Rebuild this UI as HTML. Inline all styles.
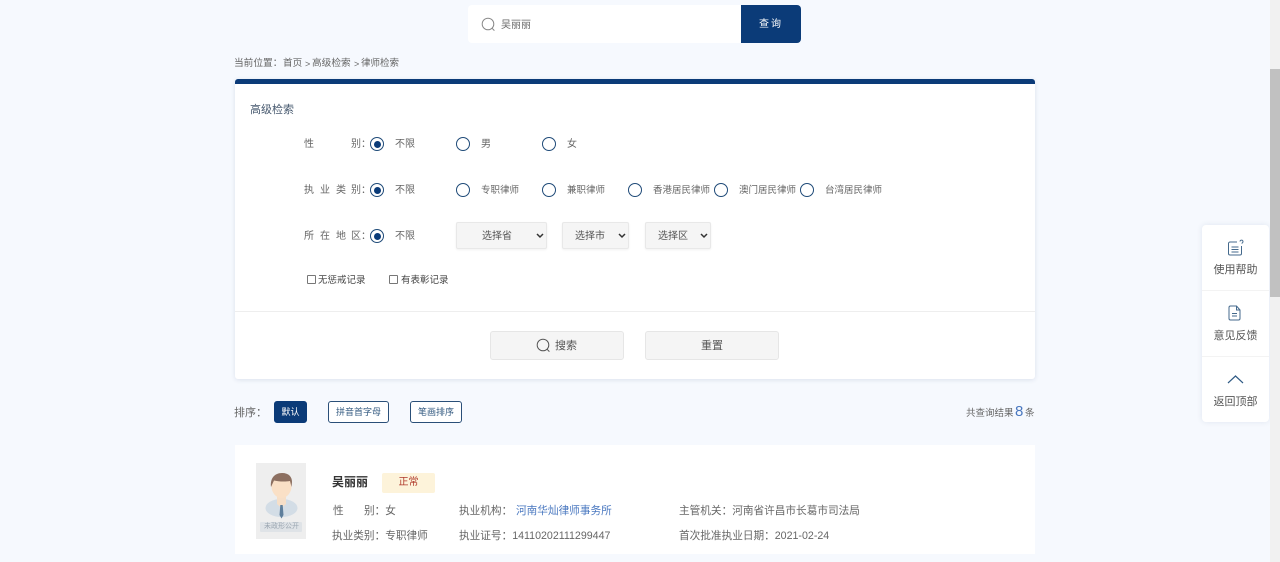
<!DOCTYPE html>
<html lang="zh-CN">
<head>
<meta charset="utf-8">
<title>律师检索</title>
<style>
html,body{margin:0;padding:0;width:1280px;height:562px;overflow:hidden;background:#f6f9fe}
body{position:relative;font-family:"Liberation Sans","Noto Sans CJK SC",sans-serif;color:#666}
.a{position:absolute;white-space:nowrap}
.t10{font-size:10px;line-height:14px;color:#666}
.t11{font-size:10.65px;line-height:14px;color:#666}
.r{position:absolute;width:12px;height:12px;border:1px solid #1f4a78;border-radius:50%;background:#fff;box-sizing:content-box}
.r.on:after{content:"";position:absolute;left:2.5px;top:2.5px;width:7px;height:7px;border-radius:50%;background:#0b3b78}
.sel{position:absolute;top:222px;height:27px;background:#f5f5f5;border:1px solid #e8e8e8;box-sizing:border-box;border-radius:2px;font-size:10px;line-height:27px;color:#555;box-shadow:0 1px 2px rgba(0,0,0,.06)}
.sel svg{position:absolute;top:10px}
.sel span{position:absolute;top:0}
.btn{position:absolute;top:331px;width:134px;height:29px;background:#f5f5f5;border:1px solid #e6e6e6;box-sizing:border-box;border-radius:3px;font-size:11px;line-height:28px;color:#555;text-align:center}
.cb{position:absolute;top:275px;width:7px;height:7px;border:1px solid #777;border-radius:1px;background:#fff}
.sort{position:absolute;top:401px;height:22px;box-sizing:border-box;border:1px solid #2a4f78;border-radius:3px;font-size:9px;line-height:20px;text-align:center;color:#335a80;background:#fff}
.side{position:absolute;left:1202px;top:225px;width:67px;height:197px;background:#fff;border-radius:4px;box-shadow:0 0 6px rgba(30,60,110,.1)}
.side .l{position:absolute;left:0;width:67px;text-align:center;font-size:11px;line-height:14px;color:#555}
.side .d{position:absolute;left:0;width:67px;height:1px;background:#f3f3f3}
</style>
</head>
<body>

<!-- top search -->
<div class="a" style="left:468px;top:5px;width:274px;height:38px;background:#fff;border-radius:4px 0 0 4px"></div>
<svg class="a" style="left:481px;top:17px" width="15" height="15" viewBox="0 0 15 15" fill="none" stroke="#888" stroke-width="1"><circle cx="7" cy="7" r="5.8"/><path d="M11 11.2l2.4 2.4"/></svg>
<div class="a" style="left:501px;top:18px;font-size:10px;line-height:15px;color:#666">吴丽丽</div>
<div class="a" style="left:741px;top:5px;width:60px;height:38px;background:#0b3b78;border-radius:0 4px 4px 0;color:#fff;font-size:10px;line-height:40px;text-align:center;letter-spacing:2px">查询</div>

<!-- breadcrumb -->
<div class="a" style="left:234px;top:57px;font-size:9.7px;line-height:14px">当前位置：</div>
<div class="a" style="left:283px;top:57px;font-size:9.6px;line-height:14px">首页</div>
<div class="a" style="left:305px;top:57px;font-size:9px;line-height:14px">&gt;</div>
<div class="a" style="left:312px;top:57px;font-size:9.7px;line-height:14px">高级检索</div>
<div class="a" style="left:354px;top:57px;font-size:9px;line-height:14px">&gt;</div>
<div class="a" style="left:361px;top:57px;font-size:9.5px;line-height:14px">律师检索</div>

<!-- panel -->
<div class="a" style="left:235px;top:79px;width:800px;height:300px;background:#fff;border-top:5px solid #0b3b78;box-sizing:border-box;border-radius:3px;box-shadow:0 1px 5px rgba(30,60,110,.12)"></div>
<div class="a" style="left:250px;top:102px;font-size:11px;line-height:16px;color:#46586e">高级检索</div>

<div class="a t10" style="left:304px;top:138px">性</div>
<div class="a t10" style="left:351px;top:138px">别：</div>
<div class="r on" style="left:370px;top:137px"></div>
<div class="a t10" style="left:395px;top:138px">不限</div>
<div class="r" style="left:456px;top:137px"></div>
<div class="a t10" style="left:481px;top:138px">男</div>
<div class="r" style="left:542px;top:137px"></div>
<div class="a t10" style="left:567px;top:138px">女</div>

<div class="a t10" style="left:304px;top:184px;letter-spacing:6px">执业类</div>
<div class="a t10" style="left:351px;top:184px">别：</div>
<div class="r on" style="left:370px;top:183px"></div>
<div class="a t10" style="left:395px;top:184px">不限</div>
<div class="r" style="left:456px;top:183px"></div>
<div class="a" style="left:481px;top:184px;font-size:9.5px;line-height:14px">专职律师</div>
<div class="r" style="left:542px;top:183px"></div>
<div class="a" style="left:567px;top:184px;font-size:9.5px;line-height:14px">兼职律师</div>
<div class="r" style="left:628px;top:183px"></div>
<div class="a" style="left:653px;top:184px;font-size:9.5px;line-height:14px">香港居民律师</div>
<div class="r" style="left:714px;top:183px"></div>
<div class="a" style="left:739px;top:184px;font-size:9.5px;line-height:14px">澳门居民律师</div>
<div class="r" style="left:800px;top:183px"></div>
<div class="a" style="left:825px;top:184px;font-size:9.5px;line-height:14px">台湾居民律师</div>

<div class="a t10" style="left:304px;top:230px;letter-spacing:6px">所在地</div>
<div class="a t10" style="left:351px;top:230px">区：</div>
<div class="r on" style="left:370px;top:229px"></div>
<div class="a t10" style="left:395px;top:230px">不限</div>

<div class="sel" style="left:456px;width:91px"><span style="left:25px">选择省</span><svg style="left:79px" width="8" height="6" viewBox="0 0 8 6" fill="none" stroke="#333" stroke-width="1.5"><path d="M1 1l3 3 3-3"/></svg></div>
<div class="sel" style="left:562px;width:67px"><span style="left:12px">选择市</span><svg style="left:55px" width="8" height="6" viewBox="0 0 8 6" fill="none" stroke="#333" stroke-width="1.5"><path d="M1 1l3 3 3-3"/></svg></div>
<div class="sel" style="left:645px;width:66px"><span style="left:12px">选择区</span><svg style="left:54px" width="8" height="6" viewBox="0 0 8 6" fill="none" stroke="#333" stroke-width="1.5"><path d="M1 1l3 3 3-3"/></svg></div>

<div class="cb" style="left:307px"></div>
<div class="a" style="left:318px;top:274px;font-size:9.5px;line-height:14px;color:#444">无惩戒记录</div>
<div class="cb" style="left:389px"></div>
<div class="a" style="left:401px;top:274px;font-size:9.5px;line-height:14px;color:#444">有表彰记录</div>

<div class="a" style="left:235px;top:311px;width:800px;height:1px;background:#eee"></div>

<div class="btn" style="left:490px"></div>
<svg class="a" style="left:536px;top:338px" width="15" height="15" viewBox="0 0 15 15" fill="none" stroke="#555" stroke-width="1"><circle cx="7" cy="7" r="5.8"/><path d="M11 11.2l2.4 2.4"/></svg>
<div class="a" style="left:555px;top:339px;font-size:11px;line-height:15px;color:#555">搜索</div>
<div class="btn" style="left:645px;line-height:29px">重置</div>

<!-- sort -->
<div class="a" style="left:234px;top:405px;font-size:11px;line-height:16px;color:#666">排序：</div>
<div class="sort" style="left:274px;width:33px;background:#0b3b78;color:#fff;border-color:#0b3b78">默认</div>
<div class="sort" style="left:328px;width:61px">拼音首字母</div>
<div class="sort" style="left:410px;width:52px">笔画排序</div>
<div class="a" style="left:966px;top:407px;font-size:9.5px;line-height:14px;color:#666">共查询结果</div>
<div class="a" style="left:1015px;top:403px;font-size:15px;line-height:18px;color:#4a78c0">8</div>
<div class="a" style="left:1025px;top:407px;font-size:9.5px;line-height:14px;color:#666">条</div>

<!-- result card -->
<div class="a" style="left:235px;top:445px;width:800px;height:109px;background:#fff"></div>
<div class="a" style="left:256px;top:463px;width:50px;height:76px;background:#eeeeee"></div>
<svg class="a" style="left:256px;top:463px" width="50" height="76" viewBox="0 0 50 76">
<ellipse cx="25.500" cy="45" rx="16" ry="9" fill="#d3dde6"/>
<path d="M21 33h9v8l-4.500 4-4.500-4z" fill="#f6dfc8"/>
<path d="M24.300 42h2.400l.8 10-2 3.500-2-3.500z" fill="#5f7f9c"/>
<ellipse cx="25.500" cy="23" rx="10" ry="12" fill="#fae0c6"/>
<path d="M15 24c-1-8 3-14 11-14 7 0 10 4 10 9l-.5 5-1.500-6c-5 1-12 .5-16-.5z" fill="#8c6f60"/>
<rect x="4" y="59" width="42" height="10" rx="1" fill="#dfe3e7"/>
</svg>
<div class="a" style="left:264px;top:522px;font-size:7px;line-height:10px;color:#9aa5b0">未政形公开</div>

<div class="a" style="left:332px;top:474px;font-size:12px;line-height:17px;font-weight:bold;color:#333">吴丽丽</div>
<div class="a" style="left:382px;top:473px;width:53px;height:20px;background:#fdf3da;border-radius:2px;font-size:10px;line-height:20px;text-align:center;color:#b0392b">正常</div>

<div class="a t11" style="left:333px;top:504px">性</div>
<div class="a t11" style="left:364px;top:504px">别：女</div>
<div class="a t11" style="left:332px;top:529px">执业类别：专职律师</div>
<div class="a t11" style="left:459px;top:504px">执业机构：</div>
<div class="a t11" style="left:516px;top:504px;color:#4a78c0">河南华灿律师事务所</div>
<div class="a t11" style="left:459px;top:529px">执业证号：14110202111299447</div>
<div class="a t11" style="left:679px;top:504px">主管机关：河南省许昌市长葛市司法局</div>
<div class="a t11" style="left:679px;top:529px">首次批准执业日期：2021-02-24</div>

<!-- side widget -->
<div class="side">
  <svg style="position:absolute;left:25px;top:14px" width="18" height="18" viewBox="0 0 18 18" fill="none" stroke="#44698c" stroke-width="1"><path d="M10 3H3a1.500 1.500 0 0 0-1.500 1.500v10A1.500 1.500 0 0 0 3 16h10a1.500 1.500 0 0 0 1.500-1.500V7"/><path d="M4.500 8h7M4.500 10.500h7M4.500 13h7"/><path d="M13 2.500a1.500 1.500 0 1 1 2.500 1.200l-.8.8"/></svg>
  <div class="l" style="top:38px">使用帮助</div>
  <div class="d" style="top:65px"></div>
  <svg style="position:absolute;left:25px;top:80px" width="16" height="17" viewBox="0 0 16 17" fill="none" stroke="#44698c" stroke-width="1"><path d="M9.500 1H3.500A1.500 1.500 0 0 0 2 2.500v11A1.500 1.500 0 0 0 3.500 15h8a1.500 1.500 0 0 0 1.500-1.500V5z"/><path d="M9.500 1v4H13M5 8.500h5M5 11h5"/></svg>
  <div class="l" style="top:104px">意见反馈</div>
  <div class="d" style="top:131px"></div>
  <svg style="position:absolute;left:25px;top:149px" width="17" height="11" viewBox="0 0 17 11" fill="none" stroke="#2f5a84" stroke-width="1.200"><path d="M1 9l7.500-7L16 9"/></svg>
  <div class="l" style="top:170px">返回顶部</div>
</div>

<!-- scrollbar -->
<div class="a" style="left:1270px;top:0;width:10px;height:562px;background:#f1f1f1"></div>
<div class="a" style="left:1270px;top:69px;width:10px;height:228px;background:#c1c1c1"></div>

</body>
</html>
